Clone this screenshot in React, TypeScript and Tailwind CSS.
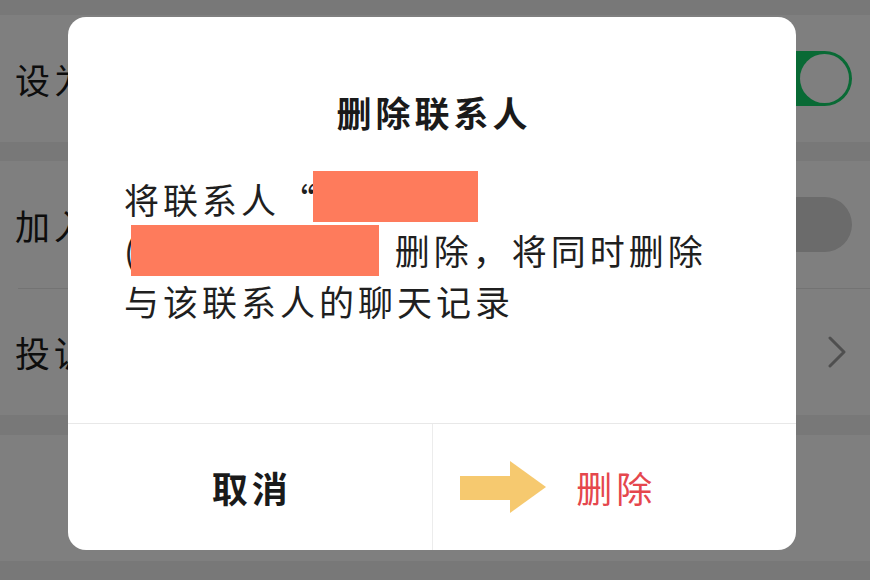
import React from 'react';

const Toggle = ({ on }: { on: boolean }) =>
  on ? (
    <div className="flex h-[55px] w-[92px] items-center justify-end rounded-full bg-[#12d46a] p-[3px]">
      <div className="h-[49px] w-[49px] rounded-full bg-white" />
    </div>
  ) : (
    <div className="h-[55px] w-[92px] rounded-full bg-[#d6d6d6]" />
  );

const Row = ({ label, right, h }: { label: string; right: React.ReactNode; h: string }) => (
  <div className={`flex items-center justify-between bg-white pl-[15px] pr-[18px] ${h}`}>
    <span className="text-[35px] leading-[50px] tracking-[4px] text-[#1a1a1a]">{label}</span>
    {right}
  </div>
);

const Chevron = () => (
  <svg width="18" height="32" viewBox="0 0 18 32" className="mr-[6px]">
    <polyline points="2,2 16,16 2,30" fill="none" stroke="#9e9e9e" strokeWidth="3" strokeLinecap="round" strokeLinejoin="round" />
  </svg>
);

export default function App() {
  return (
    <div className="relative h-[580px] w-[870px] overflow-hidden bg-[#f1f1f1] font-['Noto_Sans_CJK_SC','Noto_Sans',sans-serif]">
      {/* page underneath */}
      <div className="flex flex-col">
        <div className="h-[15px]" />
        <Row label="设为星标朋友" right={<Toggle on />} h="h-[127px]" />
        <div className="h-[19px]" />
        <Row label="加入黑名单" right={<Toggle on={false} />} h="h-[127px]" />
        <div className="bg-white pl-[18px]">
          <div className="h-px bg-[#e6e6e6]" />
        </div>
        <Row label="投诉" right={<Chevron />} h="h-[126px]" />
        <div className="h-[20px]" />
        <div className="h-[126px] bg-white" />
      </div>

      {/* mask + dialog */}
      <div className="absolute inset-0 bg-black/50 pl-[68px] pt-[17px]">
        <div className="flex h-[533px] w-[728px] flex-col overflow-hidden rounded-[18px] bg-white">
          <div className="flex-1 px-[56px] pt-[70px]">
            <h2 className="pl-[4px] text-center text-[35px] font-bold leading-[50px] tracking-[4px] text-[#1a1a1a]">
              删除联系人
            </h2>
            <p className="mt-[37px] text-[35px] leading-[50px] tracking-[4px] text-[#1f1f1f]">
              将联系人“
              <span className="relative -top-[3px] -ml-[6px] inline-block h-[51px] w-[165px] bg-[#fe7b5c] align-top" />
              <br />(
              <span className="-ml-[9px] mr-[16px] inline-block h-[51px] w-[248px] bg-[#fe7b5c] align-top" />
              删除，将同时删除
              <br />
              与该联系人的聊天记录
            </p>
          </div>
          <div className="flex h-[127px] border-t border-[#e8e8e8]">
            <button className="flex flex-1 items-center justify-center pl-[4px] text-[36px] font-bold tracking-[4px] text-[#1a1a1a]">
              取消
            </button>
            <button className="relative flex flex-1 items-center justify-center border-l border-[#ececec] pl-[4px] text-[36px] tracking-[4px] text-[#e5474d]">
              <svg width="86" height="52" viewBox="0 0 86 52" className="absolute left-[27px] top-[37px]">
                <rect x="0" y="15" width="51" height="24" fill="#f6c96f" />
                <polygon points="50,0 86,26 50,52" fill="#f6c96f" />
              </svg>
              删除
            </button>
          </div>
        </div>
      </div>
    </div>
  );
}
